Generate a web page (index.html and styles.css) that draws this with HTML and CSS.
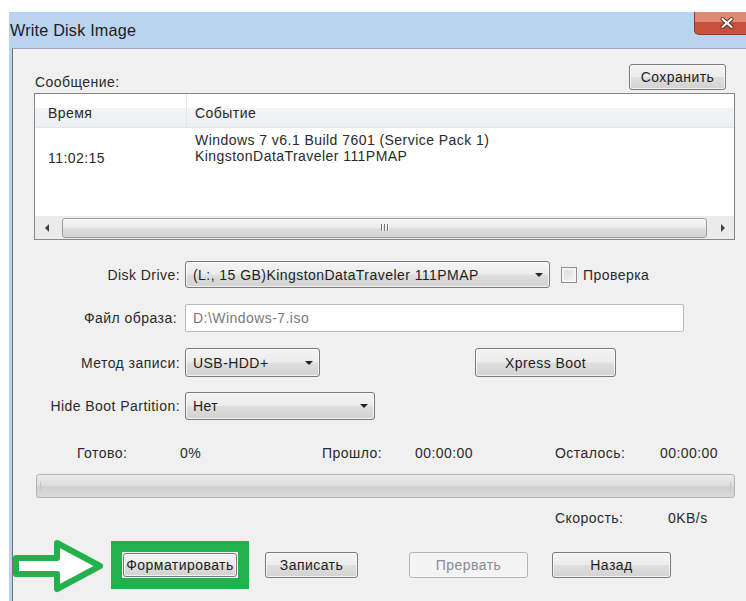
FILE: index.html
```html
<!DOCTYPE html>
<html lang="ru">
<head>
<meta charset="utf-8">
<title>Write Disk Image</title>
<link rel="stylesheet" href="styles.css">
</head>
<body>
<div class="window">
  <div class="caption">
    <span class="caption-text">Write Disk Image</span>
    <div class="caption-btn">
      <svg width="16" height="14" viewBox="0 0 16 14">
        <path d="M3.5 3 L12.5 11 M12.5 3 L3.5 11" stroke="#5a2a22" stroke-width="4" stroke-linecap="round"/>
        <path d="M3.5 3 L12.5 11 M12.5 3 L3.5 11" stroke="#ffffff" stroke-width="2.2" stroke-linecap="round"/>
      </svg>
    </div>
  </div>

  <div class="client">
    <div class="msg-head">
      <span class="msg-label">Сообщение:</span>
      <button class="btn btn-save">Сохранить</button>
    </div>

    <div class="log">
      <div class="log-head">
        <div class="col-time">Время</div>
        <div class="col-event">Событие</div>
      </div>
      <div class="log-body">
        <div class="col-time time-cell">11:02:15</div>
        <div class="col-event">Windows 7 v6.1 Build 7601 (Service Pack 1)<br>KingstonDataTraveler 111PMAP</div>
      </div>
      <div class="hscroll">
        <div class="sb-arrow"><span class="tri-left"></span></div>
        <div class="sb-thumb"><span class="grip"></span><span class="grip"></span><span class="grip"></span></div>
        <div class="sb-arrow"><span class="tri-right"></span></div>
      </div>
    </div>

    <div class="form-row row-drive">
      <label class="field-label">Disk Drive:</label>
      <div class="combo combo-drive"><span>(L:, 15 GB)KingstonDataTraveler 111PMAP</span><i class="drop"></i></div>
      <span class="check"></span>
      <span class="check-label">Проверка</span>
    </div>

    <div class="form-row row-file">
      <label class="field-label label-file">Файл образа:</label>
      <div class="textbox">D:\Windows-7.iso</div>
    </div>

    <div class="form-row row-method">
      <label class="field-label">Метод записи:</label>
      <div class="combo combo-method"><span>USB-HDD+</span><i class="drop"></i></div>
      <button class="btn btn-xpress">Xpress Boot</button>
    </div>

    <div class="form-row row-hide">
      <label class="field-label">Hide Boot Partition:</label>
      <div class="combo combo-hide"><span>Нет</span><i class="drop"></i></div>
    </div>

    <div class="status">
      <span>Готово:</span>
      <span>0%</span>
      <span>Прошло:</span>
      <span>00:00:00</span>
      <span>Осталось:</span>
      <span>00:00:00</span>
    </div>

    <div class="progress"><span class="pg-end"></span><span class="pg-end"></span></div>

    <div class="speed">
      <span>Скорость:</span>
      <span>0KB/s</span>
    </div>

    <div class="actions">
      <svg class="pointer" width="92" height="54" viewBox="0 0 92 54">
        <polygon points="3,19 44,19 44,4 87,27 44,50 44,35 3,35" fill="#ffffff" stroke="#22b14c" stroke-width="6" stroke-linejoin="round"/>
      </svg>
      <div class="highlight"><button class="btn btn-format">Форматировать</button></div>
      <button class="btn btn-write">Записать</button>
      <button class="btn btn-abort" disabled>Прервать</button>
      <button class="btn btn-back">Назад</button>
    </div>
  </div>
</div>
</body>
</html>
```

FILE: styles.css
```css
html, body {
  margin: 0;
  padding: 0;
}

body {
  width: 746px;
  height: 601px;
  overflow: hidden;
  padding-top: 12px;
  box-sizing: border-box;
  background: #ffffff;
  font-family: "Liberation Sans", Arial, sans-serif;
  font-size: 14px;
  letter-spacing: 0.45px;
  color: #2a2a2a;
}

/* window frame: glass strip on the left, caption on top */
.window {
  margin-left: 9px;
  background-color: #b9d3ef;
}

.caption {
  height: 36px;
  display: flex;
  justify-content: space-between;
  align-items: flex-start;
  background-color: #bad4ef;
  box-shadow: inset 0 0 0 40px #bad4ef;
  box-sizing: border-box;
}

.caption-text {
  align-self: center;
  padding-left: 1px;
  margin-top: 1px;
  font-size: 16.2px;
  letter-spacing: 0.2px;
  color: #1c1c1c;
}

.caption-btn {
  width: 52px;
  height: 23px;
  flex: none;
  box-sizing: border-box;
  display: flex;
  align-items: center;
  justify-content: flex-end;
  padding-right: 11px;
  border-left: 1px solid #8a3b2f;
  border-bottom: 1px solid #8a3b2f;
  border-radius: 0 0 0 5px;
  background-color: #c9503a;
  box-shadow: inset 0 10px 0 0 #df8a74;
}

.caption-btn svg {
  display: block;
}

.client {
  margin-left: 3px;
  height: 553px;
  background: #f0f0f0;
  border-left: 1px solid #6f7276;
  border-top: 1px solid #9fa8b4;
}

.btn {
  font-family: "Liberation Sans", Arial, sans-serif;
  font-size: 14px;
  letter-spacing: 0.45px;
  color: #1e1e1e;
  box-sizing: border-box;
  border: 1px solid #7a7a7a;
  border-radius: 3px;
  background: linear-gradient(#f4f4f4 0%, #ececec 48%, #dedede 52%, #d2d2d2 100%);
  box-shadow: inset 0 0 0 1px rgba(255, 255, 255, 0.7);
  padding: 0;
}

.btn:disabled {
  color: #8c8c8c;
  border-color: #b3b6b9;
  background: #f4f4f4;
  box-shadow: none;
}

.msg-head {
  display: flex;
  padding: 15px 20px 0 22px;
  height: 26px;
}

.msg-label {
  align-self: flex-end;
  line-height: 16px;
}

.btn-save {
  margin-left: auto;
  width: 97px;
  height: 26px;
}

.log {
  margin: 3px 0 0 21px;
  width: 701px;
  height: 147px;
  box-sizing: border-box;
  border: 1px solid #828790;
  background: #ffffff;
  display: flex;
  flex-direction: column;
}

.log-head {
  height: 34px;
  box-sizing: border-box;
  display: flex;
  border-bottom: 1px solid #e3e5e8;
  background: linear-gradient(#ffffff 0%, #ffffff 42%, #f2f3f5 44%, #eff0f2 100%);
  line-height: 16px;
}

.log-head .col-time,
.log-head .col-event {
  padding-top: 11px;
}

.col-time {
  width: 152px;
  padding-left: 13px;
  box-sizing: border-box;
  flex: none;
}

.log-head .col-time {
  border-right: 1px solid #e3e5e8;
}

.col-event {
  padding-left: 8px;
}

.log-body {
  flex: 1;
  display: flex;
  line-height: 16px;
  padding-top: 4px;
}

.time-cell {
  padding-top: 18px;
}

.hscroll {
  height: 23px;
  display: flex;
  align-items: center;
  background: #ebebeb;
}

.sb-arrow {
  width: 23px;
  height: 23px;
  display: flex;
  align-items: center;
  justify-content: center;
}

.tri-left,
.tri-right {
  width: 0;
  height: 0;
  border-top: 4px solid transparent;
  border-bottom: 4px solid transparent;
}

.tri-left {
  border-right: 4px solid #404040;
}

.tri-right {
  border-left: 4px solid #404040;
}

.sb-thumb {
  flex: 1;
  margin: 0 4px;
  height: 20px;
  box-sizing: border-box;
  border: 1px solid #9c9c9c;
  border-radius: 3px;
  background: linear-gradient(#f6f6f6 0%, #ececec 45%, #dcdcdc 55%, #d6d6d6 100%);
  display: flex;
  justify-content: center;
  align-items: center;
  gap: 2px;
}

.grip {
  width: 1px;
  height: 7px;
  background: #777777;
  box-shadow: 1px 0 0 #ffffff;
}

.form-row {
  display: flex;
  align-items: center;
}

.field-label {
  width: 167px;
  margin-right: 5px;
  text-align: right;
  flex: none;
}

.label-file {
  width: 164px;
  margin-right: 8px;
}

.row-drive {
  margin-top: 21px;
  height: 27px;
}

.row-file {
  margin-top: 16px;
  height: 28px;
}

.row-method {
  margin-top: 16px;
  height: 29px;
}

.row-hide {
  margin-top: 15px;
  height: 28px;
}

.combo {
  box-sizing: border-box;
  height: 100%;
  display: flex;
  align-items: center;
  justify-content: space-between;
  padding: 0 6px 0 7px;
  border: 1px solid #7a7a7a;
  border-radius: 3px;
  background: linear-gradient(#f4f4f4 0%, #ececec 48%, #dedede 52%, #d2d2d2 100%);
  box-shadow: inset 0 0 0 1px rgba(255, 255, 255, 0.7);
  color: #1e1e1e;
}

.drop {
  width: 0;
  height: 0;
  border-left: 4px solid transparent;
  border-right: 4px solid transparent;
  border-top: 4px solid #222222;
}

.combo-drive {
  width: 365px;
}

.combo-method {
  width: 135px;
}

.combo-hide {
  width: 190px;
}

.check {
  width: 16px;
  height: 16px;
  box-sizing: border-box;
  margin-left: 11px;
  border: 1px solid #8e8f8f;
  background: linear-gradient(135deg, #d8d8d8, #f8f8f8);
  box-shadow: inset 0 0 0 2px #f4f4f4;
}

.check-label {
  margin-left: 6px;
}

.textbox {
  box-sizing: border-box;
  width: 499px;
  height: 100%;
  display: flex;
  align-items: center;
  padding-left: 7px;
  border: 1px solid #b8bcc2;
  border-radius: 2px;
  background: #ffffff;
  color: #7a7a7a;
}

.btn-xpress {
  margin-left: 155px;
  width: 141px;
  height: 29px;
}

.status {
  margin-top: 25px;
  padding-left: 64px;
  display: grid;
  grid-template-columns: 103px 142px 93px 140px 105px auto;
  line-height: 16px;
}

.progress {
  margin: 13px 0 0 23px;
  width: 699px;
  height: 24px;
  box-sizing: border-box;
  border: 1px solid #b4b4b4;
  border-radius: 3px;
  background: linear-gradient(#ececec 0%, #dcdcdc 50%, #d0d0d0 51%, #d8d8d8 100%);
  display: flex;
  justify-content: space-between;
  align-items: center;
  padding: 0 3px;
}

.pg-end {
  width: 1px;
  height: 8px;
  background: #c4c4c4;
}

.speed {
  margin-top: 12px;
  padding-left: 542px;
  display: grid;
  grid-template-columns: 113px auto;
  line-height: 16px;
}

.actions {
  margin-top: 11px;
  display: flex;
  align-items: center;
}

.pointer {
  flex: none;
  margin-top: 2px;
}

.highlight {
  margin-left: 6px;
  border: 11px solid #22b14c;
  padding: 1px;
  background: #f0f0f0;
  display: flex;
}

.btn-format {
  width: 114px;
  height: 24px;
}

.btn-write {
  margin-left: 16px;
  width: 93px;
  height: 26px;
}

.btn-abort {
  margin-left: 51px;
  width: 119px;
  height: 26px;
}

.btn-back {
  margin-left: 24px;
  width: 119px;
  height: 26px;
}
```
